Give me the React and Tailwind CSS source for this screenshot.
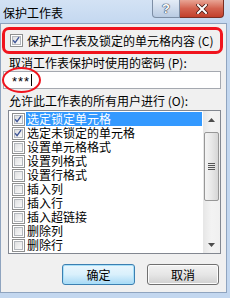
import React from 'react';

const items = [
  { label: '选定锁定单元格', checked: true, selected: true },
  { label: '选定未锁定的单元格', checked: true },
  { label: '设置单元格格式' },
  { label: '设置列格式' },
  { label: '设置行格式' },
  { label: '插入列' },
  { label: '插入行' },
  { label: '插入超链接' },
  { label: '删除列' },
  { label: '删除行' },
];

function Check({ checked }) {
  return (
    <span className="w-[13px] h-[13px] shrink-0 border border-[#8e8f8f] bg-white p-[1px] relative">
      <span className="block w-full h-full border border-[#b4b8bd] bg-gradient-to-br from-[#dfe0e1] to-[#fafafa]" />
      {checked && (
        <svg viewBox="0 0 13 13" className="absolute inset-0 w-[11px] h-[11px]">
          <path d="M2.5 6.2 L4.8 9 L9.5 2.5" fill="none" stroke="#3d5496" strokeWidth="1.6" />
        </svg>
      )}
    </span>
  );
}

function Arrow({ up }) {
  return (
    <svg viewBox="0 0 7 4" className="w-[7px] h-[4px]">
      <path d={up ? 'M0 4 L3.5 0 L7 4 Z' : 'M0 0 L3.5 4 L7 0 Z'} fill="#4d4d4d" />
    </svg>
  );
}

export default function App() {
  return (
    <div className="w-[230px] h-[298px] overflow-hidden bg-[#c3d7ef] flex flex-col font-['Noto_Sans_CJK_SC','Noto_Sans',sans-serif] text-[12px] text-black">
      {/* title bar */}
      <div className="h-[23px] shrink-0 flex bg-gradient-to-b from-[#d3e2f4] to-[#c4d8f0]">
        <span className="pl-[3px] pt-[5px] leading-[16px] text-[12px]">保护工作表</span>
        <div className="ml-auto mr-[6px] flex h-[18px]">
          <div className="w-[28px] h-full border border-[#7d8ea5] border-t-0 rounded-bl-[4px] bg-gradient-to-b from-[#e4ecf6] to-[#b9cbe2] flex items-center justify-center">
            <span className="text-white font-bold text-[13px] leading-none font-['Liberation_Sans',sans-serif] [text-shadow:0_0_1px_#2b3a55,0_0_1px_#2b3a55,0_0_1px_#2b3a55]">?</span>
          </div>
          <div className="w-[44px] h-full border border-[#7a2e24] border-t-0 border-l-0 rounded-br-[4px] bg-gradient-to-b from-[#e8a495] via-[#d3624f] to-[#c23f2a] flex items-center justify-center">
            <svg viewBox="0 0 12 10" className="w-[12px] h-[10px]">
              <path d="M2 1 L10 9 M10 1 L2 9" stroke="#4a1a14" strokeWidth="3.6" strokeLinecap="square" />
              <path d="M2 1 L10 9 M10 1 L2 9" stroke="#ffffff" strokeWidth="2" strokeLinecap="square" />
            </svg>
          </div>
        </div>
      </div>

      {/* body */}
      <div className="w-[227px] h-[270px] shrink-0 border border-[#8fa4bf] bg-[#f0f0f0] flex flex-col">
        <div className="mt-[3px] ml-[1px] w-[221px] h-[27px] border-[3px] border-[#f0141e] rounded-[7px] flex items-center pl-[5px] gap-[4px]">
          <Check checked />
          <span className="leading-[14px] whitespace-nowrap">保护工作表及锁定的单元格内容 (C)</span>
        </div>

        <div className="mt-[1px] h-[16px] pl-[8px] leading-[16px] whitespace-nowrap">取消工作表保护时使用的密码 (P):</div>

        <div className="relative ml-[2px] w-[218px] h-[18px] border border-[#a5a9b0] bg-white flex items-center pl-[8px]">
          <span className="font-['Liberation_Sans',sans-serif] text-[13px] leading-none tracking-[1px] pt-[3px]">***</span>
          <span className="w-[1px] h-[12px] bg-black ml-[1px]" />
          <div className="absolute left-[-2px] top-[-5px] w-[39px] h-[26px] border-2 border-[#f0141e] rounded-[50%]" />
        </div>

        <div className="mt-[4px] h-[16px] pl-[8px] leading-[16px] whitespace-nowrap">允许此工作表的所有用户进行 (O):</div>

        <div className="mt-[1px] ml-[7px] w-[213px] h-[144px] border border-[#828790] bg-white flex">
          <div className="flex-1 flex flex-col pt-[1px]">
            {items.map((it) => (
              <div key={it.label} className="h-[14px] flex items-center pl-[3px]">
                <Check checked={it.checked} />
                <span
                  className={`ml-[1px] flex-1 h-[14px] pl-[1px] leading-[14px] text-[12px] whitespace-nowrap ${
                    it.selected ? 'bg-[#3399ff] text-white' : ''
                  }`}
                >
                  {it.label}
                </span>
              </div>
            ))}
          </div>
          <div className="w-[17px] ml-[1px] bg-gradient-to-r from-[#e6e6e6] via-[#f3f3f3] to-[#f0f0f0] flex flex-col items-center">
            <div className="h-[17px] w-full flex items-center justify-center">
              <Arrow up />
            </div>
            <div className="mt-[4px] w-[15px] h-[69px] border border-[#979797] rounded-[2px] bg-gradient-to-r from-[#f4f4f4] via-[#e8e8e8] to-[#d6d6d6] flex flex-col items-center justify-center gap-[1px]">
              <span className="w-[7px] h-[1px] bg-[#555]" />
              <span className="w-[7px] h-[1px] bg-[#555]" />
              <span className="w-[7px] h-[1px] bg-[#555]" />
              <span className="w-[7px] h-[1px] bg-[#555]" />
            </div>
            <div className="mt-auto h-[17px] w-full flex items-center justify-center">
              <Arrow />
            </div>
          </div>
        </div>

        <div className="mt-[10px] flex justify-end gap-[12px] pr-[7px]">
          <button className="w-[73px] h-[21px] rounded-[3px] border border-[#3c7fb1] bg-gradient-to-b from-[#eaf6fd] via-[#d9f0fc] to-[#a7d9f5] shadow-[inset_0_0_0_1px_#a8e0f9] text-[12px] leading-[19px]">
            确定
          </button>
          <button className="w-[72px] h-[21px] rounded-[3px] border border-[#707070] bg-gradient-to-b from-[#f2f2f2] via-[#e6e6e6] to-[#d0d0d0] shadow-[inset_0_0_0_1px_#fcfcfc] text-[12px] leading-[19px]">
            取消
          </button>
        </div>
      </div>
    </div>
  );
}
